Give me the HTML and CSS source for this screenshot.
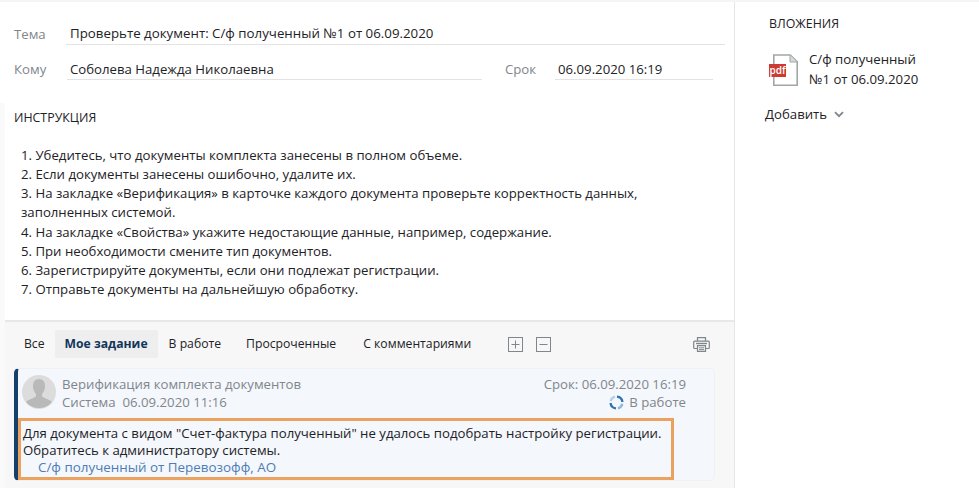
FILE: index.html
```html
<!DOCTYPE html>
<html lang="ru">
<head>
  <meta charset="UTF-8">
  <title>Задание</title>
  <link rel="stylesheet" href="styles.css">
</head>
<body>
  <div class="page">
    <div class="main">
      <div class="form">
        <div class="row row-subject">
          <span class="label">Тема</span>
          <div class="value value-subject">Проверьте документ: С/ф полученный №1 от 06.09.2020</div>
        </div>
        <div class="row row-to">
          <span class="label">Кому</span>
          <div class="value value-to">Соболева Надежда Николаевна</div>
          <span class="label label-due">Срок</span>
          <div class="value value-due">06.09.2020 16:19</div>
        </div>
      </div>

      <div class="instruction">
        <div class="caption">ИНСТРУКЦИЯ</div>
        <div class="steps">
          <div>1. Убедитесь, что документы комплекта занесены в полном объеме.</div>
          <div>2. Если документы занесены ошибочно, удалите их.</div>
          <div>3. На закладке «Верификация» в карточке каждого документа проверьте корректность данных,<br>заполненных системой.</div>
          <div>4. На закладке «Свойства» укажите недостающие данные, например, содержание.</div>
          <div>5. При необходимости смените тип документов.</div>
          <div>6. Зарегистрируйте документы, если они подлежат регистрации.</div>
          <div>7. Отправьте документы на дальнейшую обработку.</div>
        </div>
      </div>

      <div class="tasks">
        <div class="tabs">
          <span class="tab tab-all">Все</span>
          <span class="tab tab-active">Мое задание</span>
          <span class="tab">В работе</span>
          <span class="tab tab-overdue">Просроченные</span>
          <span class="tab tab-comments">С комментариями</span>
          <span class="square-btn square-plus">
            <svg width="15" height="15" viewBox="0 0 15 15"><rect x="0.5" y="0.5" width="14" height="14" fill="none" stroke="#7f868c"/><path d="M3.5 7.5h8M7.5 3.5v8" stroke="#7f868c" fill="none"/></svg>
          </span>
          <span class="square-btn">
            <svg width="15" height="15" viewBox="0 0 15 15"><rect x="0.5" y="0.5" width="14" height="14" fill="none" stroke="#7f868c"/><path d="M3.5 7.5h8" stroke="#7f868c" fill="none"/></svg>
          </span>
          <svg class="print" width="17" height="15" viewBox="0 0 17 15">
            <path d="M4.5 4V.7h8V4M4 11.5H1.7a1 1 0 0 1-1-1V5.2a1 1 0 0 1 1-1h13.6a1 1 0 0 1 1 1v5.3a1 1 0 0 1-1 1H13" fill="none" stroke="#7f868c" stroke-width="1.2"/>
            <path d="M3 6.5h11" stroke="#7f868c" stroke-width="1.4"/>
            <path d="M4.5 8.7h8v5.6h-8z" fill="none" stroke="#7f868c" stroke-width="1.2"/>
            <path d="M6 10.8h5M6 12.6h5" stroke="#7f868c"/>
          </svg>
        </div>

        <div class="card">
          <div class="card-head">
            <svg class="avatar" width="34" height="34" viewBox="0 0 34 34">
              <circle cx="17" cy="17" r="17" fill="#dcdcdc"/>
              <path d="M17 4c-4 0-6 3-6 7 0 3 1 6 3 8v2c-1 2-6 3-9 5l-1 1a17 17 0 0 0 26 0l-1-1c-3-2-8-3-9-5v-2c2-2 3-5 3-8 0-4-2-7-6-7z" fill="#b9b9b9"/>
            </svg>
            <div class="card-title">
              <div>Верификация комплекта документов</div>
              <div>Система&nbsp; 06.09.2020 11:16</div>
            </div>
            <div class="card-status">
              <div>Срок: 06.09.2020 16:19</div>
              <div class="status-line">
                <svg width="15" height="15" viewBox="0 0 15 15" fill="none" stroke-width="2.4">
                  <path d="M1.7 6A6 6 0 0 1 6 1.7" stroke="#b5d0ea"/>
                  <path d="M8 1.6A6 6 0 0 1 13.4 7" stroke="#2f74b5"/>
                  <path d="M13.3 8.8A6 6 0 0 1 9 13.3" stroke="#8fb8de"/>
                  <path d="M7 13.4A6 6 0 0 1 1.6 8" stroke="#2f74b5"/>
                </svg>
                В работе
              </div>
            </div>
          </div>
          <div class="message">
            <div>Для документа с видом "Счет-фактура полученный" не удалось подобрать настройку регистрации.</div>
            <div>Обратитесь к администратору системы.</div>
            <a class="doc-link">С/ф полученный от Перевозофф, АО</a>
          </div>
        </div>
      </div>
    </div>

    <div class="side">
      <div class="caption">ВЛОЖЕНИЯ</div>
      <div class="attachment">
        <svg class="file" width="29" height="32" viewBox="0 0 29 32">
          <path d="M4.8 1h16.5l6.9 6.9v23.3H4.8z" fill="#fff" stroke="#a3a6a8" stroke-width="1.6"/>
          <path d="M21 1v7h7" fill="#d9d9d9" stroke="#a3a6a8"/>
          <rect x="0" y="10" width="17" height="13" fill="#cc3a31"/>
          <text x="8.5" y="20" class="file-text" text-anchor="middle">pdf</text>
        </svg>
        <div class="file-name">С/ф полученный<br>№1 от 06.09.2020</div>
      </div>
      <div class="add">
        Добавить
        <svg width="10" height="7" viewBox="0 0 10 7"><path d="M1 1.2l4 4 4-4" fill="none" stroke="#80868b" stroke-width="1.8"/></svg>
      </div>
    </div>
  </div>
</body>
</html>
```

FILE: styles.css
```css
* {
  box-sizing: border-box;
}
html, body {
  height: 100%;
}
body {
  margin: 0;
  background: #fff;
  font-family: "Open Sans", "Noto Sans", sans-serif;
  font-size: 13.2px;
  color: #1d2226;
  overflow: hidden;
}
.page {
  display: flex;
  height: 488px;
  border-top: 2px solid #f5f5f5;
}
.main {
  width: 735px;
  border-right: 1px solid #e6e6e6;
  background: #fafafa;
  display: flex;
  flex-direction: column;
}
.form {
  height: 101px;
  background: #fff;
  padding: 21px 9px 0 14px;
}
.row {
  display: flex;
  align-items: flex-end;
}
.row-to {
  margin-top: 13px;
}
.label {
  color: #7f868c;
  width: 53px;
  line-height: 21px;
}
.value {
  line-height: 22px;
  height: 22px;
  border-bottom: 1px solid #e3e3e3;
}
.value-subject {
  flex: 1;
  padding-left: 4px;
  margin-left: -1px;
  font-size: 13.3px;
  line-height: 20px;
}
.value-to {
  width: 415px;
  padding-left: 3px;
}
.row-to .label {
  line-height: 22px;
}
.label-due {
  margin-left: 23px;
  width: 50px;
}
.value-due {
  width: 158px;
  padding-left: 3px;
}
.instruction {
  height: 217px;
  margin-left: 5px;
  padding: 6px 0 0 9px;
  background: #fff;
}
.caption {
  font-size: 12.4px;
  line-height: 18px;
}
.steps {
  margin-top: 19px;
  padding-left: 7px;
  line-height: 19.15px;
}
.tasks {
  flex: 1;
  margin-left: 5px;
  background: #f7f7f7;
  border-top: 2px solid #e8e8e8;
  padding: 8px 19px 0 9px;
}
.tabs {
  display: flex;
  align-items: center;
  height: 28px;
  font-size: 12.2px;
}
.tab {
  padding: 0 12px;
  line-height: 28px;
  border-radius: 2px;
}
.tab-all {
  padding: 0 10px;
}
.tab-active {
  margin-right: -1px;
  padding: 0 10px;
  font-weight: 700;
  color: #12355b;
  background: #eeeeee;
}
.tab-overdue {
  margin-left: 1px;
}
.tab-comments {
  margin-left: 3px;
}
.square-btn {
  display: flex;
  margin-left: 13px;
}
.square-plus {
  margin-left: 25px;
}
.print {
  margin-left: auto;
  margin-right: 5px;
}
.card {
  margin-top: 10px;
  height: 113px;
  background: #f4f7fc;
  border: 1px solid #edf0f5;
  border-left: 4px solid #15406b;
  border-radius: 5px;
  padding-top: 6px;
}
.card-head {
  display: flex;
  color: #7f868c;
  line-height: 18px;
  padding: 0 28px 0 4px;
}
.avatar {
  margin-right: 6px;
}
.card-title {
  flex: 1;
}
.card-status {
  text-align: right;
}
.status-line {
  display: flex;
  justify-content: flex-end;
  align-items: center;
  gap: 5px;
}
.message {
  margin-top: 7px;
  width: 656px;
  height: 62px;
  border: 3px solid #eba25f;
  padding: 4px 0 0 2px;
  line-height: 17px;
}
.doc-link {
  display: block;
  color: #4e7db5;
  font-size: 13.4px;
  padding-left: 15px;
}
.side {
  flex: 1;
  padding: 13px 0 0 30px;
}
.side .caption {
  padding-left: 4px;
}
.attachment {
  display: flex;
  margin-top: 16px;
  line-height: 20px;
}
.file {
  margin: 5px 11px 0 4px;
  flex-shrink: 0;
}
.file-text {
  font-size: 10px;
  font-weight: 600;
  fill: #fff;
}
.add {
  margin-top: 16px;
  display: flex;
  align-items: center;
  gap: 7px;
  line-height: 18px;
}
```
